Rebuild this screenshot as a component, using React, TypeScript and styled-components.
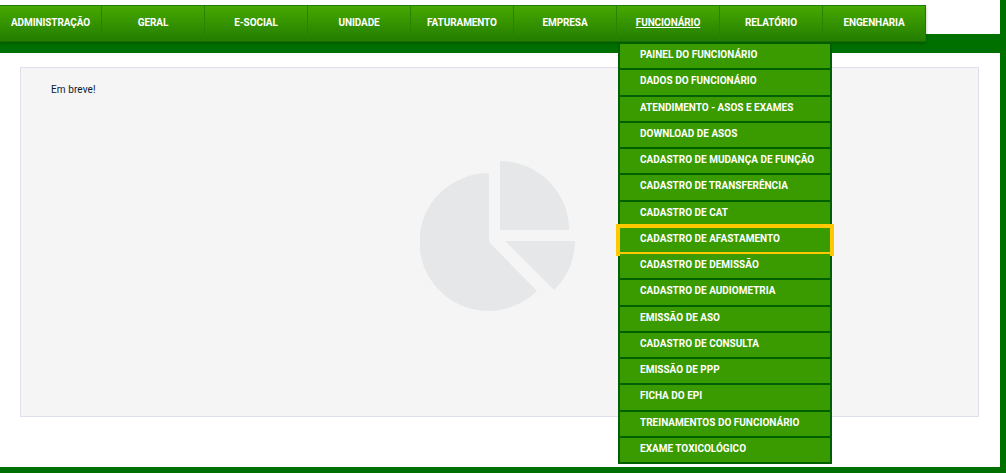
import React from "react";
import styled, { createGlobalStyle } from "styled-components";

const Global = createGlobalStyle`
  html, body { margin: 0; padding: 0; background: #fff; }
  body { font-family: Roboto, "Noto Sans", "DejaVu Sans", sans-serif; }
  #root { height: 473px; overflow: hidden; }
`;

const Page = styled.div`
  box-sizing: border-box;
  height: 473px;
  border-right: 6px solid #007000;
  border-bottom: 6px solid #007000;
  background: #fff;
`;

const Header = styled.header`
  height: 53px;
  padding-top: 5px;
  box-sizing: border-box;
  background: linear-gradient(#fff 0 34px, #007000 34px);
`;

const Nav = styled.nav`
  display: flex;
  width: 926px;
  height: 37px;
  box-sizing: border-box;
  border-top: 1px solid #1f7a00;
  border-bottom: 1px solid #1c6b00;
  background: linear-gradient(#46a800, #237d00);
  box-shadow: 0 2px 3px rgba(0, 60, 0, 0.35);
`;

const NavItem = styled.div`
  position: relative;
  flex: 0 0 103px;
  box-sizing: border-box;
  border-right: 1px solid #2a8200;
  text-align: center;
  line-height: 34px;
  font-size: 10px;
  font-weight: 700;
  letter-spacing: -0.1px;
  color: #fff;
  &:first-child { flex-basis: 102px; }
  &:last-child { border-right-color: #1f7a00; }
`;

const NavLabel = styled.span<{ $active?: boolean }>`
  text-decoration: ${(p) => (p.$active ? "underline" : "none")};
`;

const Dropdown = styled.ul`
  position: absolute;
  top: 36px;
  left: 1px;
  z-index: 5;
  display: flex;
  flex-direction: column;
  gap: 2px;
  width: 214px;
  box-sizing: border-box;
  margin: 0;
  padding: 2px;
  list-style: none;
  background: #005f00;
`;

const DropItem = styled.li<{ $selected?: boolean }>`
  height: 24.27px;
  padding-left: 20px;
  background: #3a9b00;
  text-align: left;
  line-height: 22px;
  font-size: 10px;
  font-weight: 700;
  letter-spacing: 0;
  color: #fff;
  outline: ${(p) => (p.$selected ? "4px solid #ffc800" : "none")};
`;

const Main = styled.main`
  padding: 14px 21px 0 20px;
`;

const Panel = styled.section`
  position: relative;
  height: 350px;
  box-sizing: border-box;
  border: 1px solid #dde1ee;
  background: #f5f5f5;
  padding: 15px 30px;
`;

const Message = styled.p`
  margin: 0;
  font-size: 10px;
  line-height: 14px;
  letter-spacing: 0.1px;
  color: #0c1a2e;
`;

const PieIcon = styled.svg`
  position: absolute;
  left: 399px;
  top: 93px;
  width: 156px;
  height: 150px;
`;

const navItems = ["ADMINISTRAÇÃO", "GERAL", "E-SOCIAL", "UNIDADE", "FATURAMENTO", "EMPRESA", "FUNCIONÁRIO", "RELATÓRIO", "ENGENHARIA"];
const menu = [
  "PAINEL DO FUNCIONÁRIO",
  "DADOS DO FUNCIONÁRIO",
  "ATENDIMENTO - ASOS E EXAMES",
  "DOWNLOAD DE ASOS",
  "CADASTRO DE MUDANÇA DE FUNÇÃO",
  "CADASTRO DE TRANSFERÊNCIA",
  "CADASTRO DE CAT",
  "CADASTRO DE AFASTAMENTO",
  "CADASTRO DE DEMISSÃO",
  "CADASTRO DE AUDIOMETRIA",
  "EMISSÃO DE ASO",
  "CADASTRO DE CONSULTA",
  "EMISSÃO DE PPP",
  "FICHA DO EPI",
  "TREINAMENTOS DO FUNCIONÁRIO",
  "EXAME TOXICOLÓGICO",
];

export default function App() {
  return (
    <Page>
      <Global />
      <Header>
        <Nav>
          {navItems.map((n) => (
            <NavItem key={n}>
              <NavLabel $active={n === "FUNCIONÁRIO"}>{n}</NavLabel>
              {n === "FUNCIONÁRIO" && (
                <Dropdown>
                  {menu.map((m) => (
                    <DropItem key={m} $selected={m === "CADASTRO DE AFASTAMENTO"}>{m}</DropItem>
                  ))}
                </Dropdown>
              )}
            </NavItem>
          ))}
        </Nav>
      </Header>
      <Main>
        <Panel>
          <Message>Em breve!</Message>
          <PieIcon viewBox="0 0 156 150" aria-hidden="true">
            <path fill="#e6e7e8" d="M69 12 A69 69 0 1 0 117 130 L69 81 Z" />
            <path fill="#e6e7e8" d="M80 0 A69 69 0 0 1 149 69 L80 69 Z" />
            <path fill="#e6e7e8" d="M85 80 L155 80 A69 69 0 0 1 134 129 Z" />
          </PieIcon>
        </Panel>
      </Main>
    </Page>
  );
}
